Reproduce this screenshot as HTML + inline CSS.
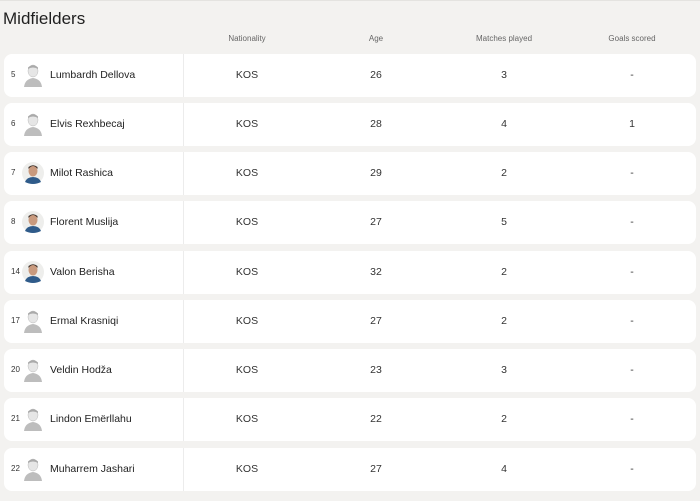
<!DOCTYPE html><html><head><style>
body{margin:0;width:700px;height:501px;background:#f3f2f0;font-family:"Liberation Sans",sans-serif;position:relative;overflow:hidden;color:#2b2b2b}
.top{position:absolute;left:0;top:0;width:700px;height:1px;background:#e4e3e0}
h1{position:absolute;left:3px;top:9px;margin:0;font-size:17px;font-weight:normal;color:#1f1f1f}
.hd{position:absolute;top:34px;font-size:8px;color:#666;transform:translateX(-50%)}
.row{position:absolute;left:4px;width:692px;height:43px;background:#fff;border-radius:8px;font-size:10px}
.row .div{position:absolute;left:179px;top:0;width:1px;height:43px;background:#ececec}
.num{position:absolute;left:7px;top:16px;font-size:8px;color:#333}
.name{position:absolute;left:46px;top:15px;font-size:10.5px;color:#222}
.c{position:absolute;top:15px;transform:translateX(-50%);font-size:10.5px;color:#333}
.av{position:absolute;left:18px;top:9px;width:22px;height:24px}
</style></head><body><div class="top"></div>
<h1>Midfielders</h1>
<div class="hd" style="left:247px">Nationality</div>
<div class="hd" style="left:376px">Age</div>
<div class="hd" style="left:504px">Matches played</div>
<div class="hd" style="left:632px">Goals scored</div>
<div id="rows"></div>
<script>
var d=[["5","Lumbardh Dellova","26","3","-",0],["6","Elvis Rexhbecaj","28","4","1",0],["7","Milot Rashica","29","2","-",1],["8","Florent Muslija","27","5","-",1],["14","Valon Berisha","32","2","-",1],["17","Ermal Krasniqi","27","2","-",0],["20","Veldin Hodža","23","3","-",0],["21","Lindon Emërllahu","22","2","-",0],["22","Muharrem Jashari","27","4","-",0]];
var tops=[54,103,152,201,251,300,349,398,448],h="";
var sil='<svg class="av" viewBox="0 0 22 24"><ellipse cx="11" cy="8" rx="5" ry="6" fill="#e6e6e6" stroke="#bbb" stroke-width=".5"/><path d="M6 4.5 Q11 0 16 4.5 L16 6 Q11 3 6 6Z" fill="#aaa"/><path d="M2 24 Q3 16 11 15 Q19 16 20 24Z" fill="#bdbdbd"/></svg>';
var ph='<svg class="av" viewBox="0 0 22 24"><circle cx="11" cy="12" r="11" fill="#eeeeec"/><ellipse cx="11" cy="10" rx="4.5" ry="5.5" fill="#c99a7e"/><path d="M6.5 8 Q11 2 15.5 8 L15.5 6 Q11 2.5 6.5 6Z" fill="#3a2e28"/><path d="M3 21 Q5 16 11 16 Q17 16 19 21 Q11 25 3 21Z" fill="#2f5b8a"/></svg>';
d.forEach(function(r,i){h+='<div class="row" style="top:'+tops[i]+'px"><div class="div"></div><div class="num">'+r[0]+'</div>'+(r[5]?ph:sil)+'<div class="name">'+r[1]+'</div><div class="c" style="left:243px">KOS</div><div class="c" style="left:372px">'+r[2]+'</div><div class="c" style="left:500px">'+r[3]+'</div><div class="c" style="left:628px">'+r[4]+'</div></div>'});
document.getElementById("rows").innerHTML=h;
</script></body></html>
